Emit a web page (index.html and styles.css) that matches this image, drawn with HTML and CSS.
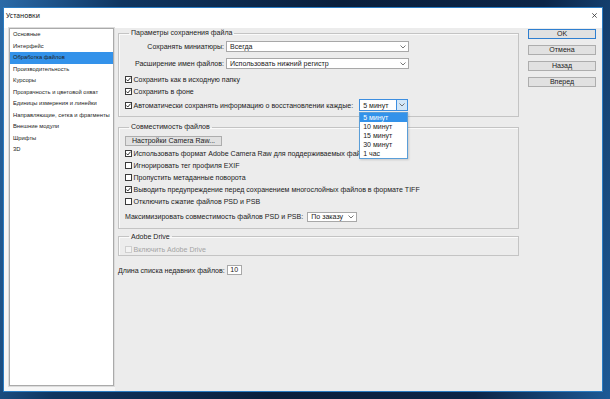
FILE: index.html
```html
<!DOCTYPE html>
<html lang="ru">
<head>
    <meta charset="UTF-8">
    <meta name="viewport" content="width=device-width, initial-scale=1.0">
    <title>Установки</title>
    <link rel="stylesheet" href="styles.css">
</head>
<body>
    <div class="window">
        <div class="titlebar">
            <span class="title">Установки</span>
            <svg class="close" viewBox="0 0 5 5" width="5" height="5"><path d="M0.3 0.3L4.7 4.7M4.7 0.3L0.3 4.7"/></svg>
        </div>
        <div class="content">
            <div class="sidebar">
                <ul class="nav">
                    <li>Основные</li>
                    <li>Интерфейс</li>
                    <li class="active">Обработка файлов</li>
                    <li>Производительность</li>
                    <li>Курсоры</li>
                    <li>Прозрачность и цветовой охват</li>
                    <li>Единицы измерения и линейки</li>
                    <li>Направляющие, сетка и фрагменты</li>
                    <li>Внешние модули</li>
                    <li>Шрифты</li>
                    <li>3D</li>
                </ul>
            </div>

            <div class="main">
                <fieldset class="group g-save">
                    <legend>Параметры сохранения файла</legend>
                    <div class="row r-thumbs">
                        <span class="label">Сохранять миниатюры:</span>
                        <div class="select s-wide"><span>Всегда</span><svg class="chev" viewBox="0 0 6 4"><polyline points="0.5,0.5 3,3 5.5,0.5"/></svg></div>
                    </div>
                    <div class="row r-ext">
                        <span class="label">Расширение имен файлов:</span>
                        <div class="select s-wide"><span>Использовать нижний регистр</span><svg class="chev" viewBox="0 0 6 4"><polyline points="0.5,0.5 3,3 5.5,0.5"/></svg></div>
                    </div>
                    <div class="row r-first">
                        <svg class="cb" viewBox="0 0 7 7"><rect x="0.5" y="0.5" width="6" height="6"/><polyline points="1.4,3.5 2.8,5 5.6,1.7"/></svg>
                        <span>Сохранить как в исходную папку</span>
                    </div>
                    <div class="row">
                        <svg class="cb" viewBox="0 0 7 7"><rect x="0.5" y="0.5" width="6" height="6"/><polyline points="1.4,3.5 2.8,5 5.6,1.7"/></svg>
                        <span>Сохранить в фоне</span>
                    </div>
                    <div class="row r-auto">
                        <svg class="cb" viewBox="0 0 7 7"><rect x="0.5" y="0.5" width="6" height="6"/><polyline points="1.4,3.5 2.8,5 5.6,1.7"/></svg>
                        <span>Автоматически сохранять информацию о восстановлении каждые:</span>
                        <div class="combo">
                            <div class="select s-small focus"><span>5 минут</span><span class="arrow"><svg class="chev" viewBox="0 0 6 4"><polyline points="0.5,0.5 3,3 5.5,0.5"/></svg></span></div>
                            <ul class="dropdown">
                                <li class="sel">5 минут</li>
                                <li>10 минут</li>
                                <li>15 минут</li>
                                <li>30 минут</li>
                                <li>1 час</li>
                            </ul>
                        </div>
                    </div>
                </fieldset>

                <fieldset class="group g-compat">
                    <legend>Совместимость файлов</legend>
                    <div class="button raw">Настройки Camera Raw...</div>
                    <div class="row r-first">
                        <svg class="cb" viewBox="0 0 7 7"><rect x="0.5" y="0.5" width="6" height="6"/><polyline points="1.4,3.5 2.8,5 5.6,1.7"/></svg>
                        <span>Использовать формат Adobe Camera Raw для поддерживаемых файлов</span>
                    </div>
                    <div class="row">
                        <svg class="cb" viewBox="0 0 7 7"><rect x="0.5" y="0.5" width="6" height="6"/></svg>
                        <span>Игнорировать тег профиля EXIF</span>
                    </div>
                    <div class="row">
                        <svg class="cb" viewBox="0 0 7 7"><rect x="0.5" y="0.5" width="6" height="6"/></svg>
                        <span>Пропустить метаданные поворота</span>
                    </div>
                    <div class="row">
                        <svg class="cb" viewBox="0 0 7 7"><rect x="0.5" y="0.5" width="6" height="6"/><polyline points="1.4,3.5 2.8,5 5.6,1.7"/></svg>
                        <span>Выводить предупреждение перед сохранением многослойных файлов в формате TIFF</span>
                    </div>
                    <div class="row">
                        <svg class="cb" viewBox="0 0 7 7"><rect x="0.5" y="0.5" width="6" height="6"/></svg>
                        <span>Отключить сжатие файлов PSD и PSB</span>
                    </div>
                    <div class="row r-max">
                        <span>Максимизировать совместимость файлов PSD и PSB:</span>
                        <div class="select s-mid"><span>По заказу</span><svg class="chev" viewBox="0 0 6 4"><polyline points="0.5,0.5 3,3 5.5,0.5"/></svg></div>
                    </div>
                </fieldset>

                <fieldset class="group g-drive">
                    <legend>Adobe Drive</legend>
                    <div class="row disabled">
                        <svg class="cb" viewBox="0 0 7 7"><rect x="0.5" y="0.5" width="6" height="6"/></svg>
                        <span>Включить Adobe Drive</span>
                    </div>
                </fieldset>

                <div class="row r-recent">
                    <span>Длина списка недавних файлов:</span>
                    <span class="num">10</span>
                </div>
            </div>

            <div class="btns">
                <div class="button default">OK</div>
                <div class="button">Отмена</div>
                <div class="button">Назад</div>
                <div class="button">Вперед</div>
            </div>
        </div>
    </div>
</body>
</html>
```

FILE: styles.css
```css
* {
    box-sizing: border-box;
}
html, body {
    margin: 0;
    height: 100%;
}
body {
    padding: 7px 7px 7px 3px;
    background: linear-gradient(100deg, #2a6aa8 0%, #0f3560 18%, #0a1f3c 50%, #0c2547 80%, #1d5a96 100%);
    font-family: "Liberation Sans", Arial, sans-serif;
    font-size: 7.05px;
    color: #222;
}
.window {
    width: 600px;
    height: 385px;
    border: 1px solid #2b7cc2;
    background: #ececec;
    display: flex;
    flex-direction: column;
}
.titlebar {
    height: 20px;
    flex: none;
    background: #fff;
    display: flex;
    justify-content: space-between;
    align-items: flex-start;
    padding: 2px 5px 0 2px;
}
.title {
    font-family: "Noto Sans", sans-serif;
    font-size: 6.8px;
    line-height: 11px;
    color: #111;
}
.close {
    margin-top: 2.5px;
    stroke: #333;
    stroke-width: 0.8;
}
.content {
    flex: 1;
    display: flex;
}
.sidebar {
    width: 111px;
    flex: none;
    background: #f6f6f6;
    padding: 0 1px 5px 5px;
    display: flex;
}
.nav {
    flex: 1;
    list-style: none;
    margin: 0;
    padding: 0;
    background: #fff;
    border: 1px solid #aaa;
    box-shadow: 0 0 0 1px #dcdcdc;
}
.nav li {
    height: 11.5px;
    line-height: 11.5px;
    padding-left: 3px;
    font-size: 5.8px;
    white-space: nowrap;
}
.nav li.active {
    background: #3392ea;
}
.main {
    width: 401px;
    flex: none;
    margin-left: 3px;
}
.group {
    margin: 0;
    min-width: 0;
    padding: 0 6px;
    border: 1px solid #c4c4c4;
    box-shadow: inset 1px 1px 0 #fafafa;
}
.group legend {
    margin-left: 4px;
    padding: 0 2px;
    line-height: 10px;
}
.row {
    display: flex;
    align-items: center;
    height: 12px;
    white-space: nowrap;
}
.label {
    width: 99px;
    text-align: right;
    margin-right: 2px;
}
.r-thumbs {
    height: 11px;
    margin-top: 3px;
}
.r-ext {
    height: 11px;
    margin-top: 6px;
}
.r-first {
    margin-top: 4px;
}
.r-auto {
    margin-top: 2px;
    margin-bottom: 5px;
}
.cb {
    width: 7px;
    height: 7px;
    flex: none;
    margin-right: 1.5px;
}
.cb rect {
    fill: #fff;
    stroke: #3a3a3a;
    stroke-width: 1;
}
.cb polyline {
    fill: none;
    stroke: #1a1a1a;
    stroke-width: 0.9;
}
.select {
    display: flex;
    align-items: center;
    justify-content: space-between;
    height: 11px;
    border: 1px solid #a8a8a8;
    background: #fff;
    padding: 0 2px 0 3px;
}
.chev {
    width: 6px;
    height: 4px;
    fill: none;
    stroke: #555;
    stroke-width: 0.8;
}
.s-wide {
    width: 183px;
}
.s-small {
    width: 49px;
    height: 12px;
    padding-right: 0;
}
.s-mid {
    width: 50px;
    height: 10px;
    margin-left: 4px;
}
.focus {
    border-color: #3d8ee0;
}
.arrow {
    width: 11px;
    height: 100%;
    display: flex;
    align-items: center;
    justify-content: center;
    background: #d3e7f8;
    border-left: 1px solid #3d8ee0;
}
.combo {
    position: relative;
    margin-left: 6px;
}
.dropdown {
    position: absolute;
    z-index: 5;
    top: 13px;
    left: 0;
    width: 49px;
    margin: 0;
    padding: 0;
    list-style: none;
    background: #fff;
    border: 1px solid #5a9ed8;
    box-shadow: 1px 1px 2px rgba(0, 0, 0, 0.15);
}
.dropdown li {
    height: 9px;
    line-height: 9px;
    padding-left: 3px;
    font-size: 7px;
}
.dropdown li.sel {
    background: #3392ea;
    color: #fff;
}
.g-compat {
    margin-top: 5px;
    padding-bottom: 5px;
}
.g-save {
    padding-bottom: 0;
}
.button {
    height: 10px;
    line-height: 8px;
    text-align: center;
    border: 1px solid #adadad;
    background: #e1e1e1;
    white-space: nowrap;
}
.raw {
    width: 97px;
    margin-top: 4px;
}
.g-compat .r-first {
    margin-top: 1.5px;
}
.r-max {
    margin-top: 3px;
}
.g-drive {
    margin-top: 3px;
}
.disabled {
    color: #a4a4a4;
    height: 10px;
    margin-top: 3px;
}
.disabled .cb rect {
    stroke: #cfcfcf;
    fill: #f3f3f3;
}
.r-recent {
    margin-top: 8.5px;
}
.num {
    width: 15px;
    height: 10px;
    line-height: 8px;
    margin-left: 2px;
    border: 1px solid #a8a8a8;
    background: #fff;
    text-align: center;
}
.btns {
    width: 68px;
    flex: none;
    margin-left: 9px;
    padding-top: 1px;
}
.btns .button {
    margin-bottom: 6px;
}
.btns .default {
    border-color: #2f7fd0;
}
```
